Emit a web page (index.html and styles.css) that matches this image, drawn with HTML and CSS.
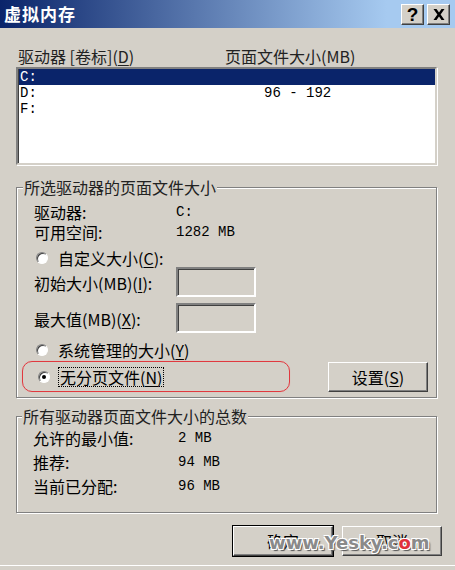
FILE: index.html
```html
<!DOCTYPE html>
<html lang="zh-CN">
<head>
  <meta charset="UTF-8" />
  <title>虚拟内存</title>
  <link rel="stylesheet" href="styles.css">
</head>
<body>
  <div class="window">
    <div class="titlebar">
      <span class="title">虚拟内存</span>
      <span class="caption-btns">
        <span class="cap-btn help">?</span>
        <span class="cap-btn">
          <svg width="12" height="11" viewBox="0 0 12 11"><path d="M0.5 0h3l2.5 3.6L8.5 0h3L7.6 5.5 11.5 11h-3L6 7.4 3.5 11h-3l3.9-5.5z" fill="#000"/></svg>
        </span>
      </span>
    </div>

    <div class="content">
      <div class="list-head">
        <span class="col-drive">驱动器 [卷标](<u>D</u>)</span>
        <span>页面文件大小(MB)</span>
      </div>
      <div class="listbox">
        <div class="row selected"><span class="col-drive">C:</span><span></span></div>
        <div class="row"><span class="col-drive">D:</span><span class="col-size">96 - 192</span></div>
        <div class="row"><span class="col-drive">F:</span><span></span></div>
      </div>

      <fieldset class="group first">
        <legend>所选驱动器的页面文件大小</legend>
        <div class="info"><span class="key">驱动器:</span><span class="val">C:</span></div>
        <div class="info"><span class="key">可用空间:</span><span class="val">1282 MB</span></div>
        <div class="option top"><span class="radio"></span>自定义大小(<u>C</u>):</div>
        <div class="field"><span class="key">初始大小(MB)(<u>I</u>):</span><span class="textbox"></span></div>
        <div class="field"><span class="key">最大值(MB)(<u>X</u>):</span><span class="textbox"></span></div>
        <div class="option system"><span class="radio"></span>系统管理的大小(<u>Y</u>)</div>
        <div class="choice-row">
          <div class="highlight">
            <div class="option"><span class="radio checked"></span><span class="focus">无分页文件(<u>N</u>)</span></div>
          </div>
          <span class="button">设置(<u>S</u>)</span>
        </div>
      </fieldset>

      <fieldset class="group totals">
        <legend>所有驱动器页面文件大小的总数</legend>
        <div class="total"><span class="key">允许的最小值:</span><span class="val">2 MB</span></div>
        <div class="total"><span class="key">推荐:</span><span class="val">94 MB</span></div>
        <div class="total"><span class="key">当前已分配:</span><span class="val">96 MB</span></div>
      </fieldset>

      <div class="actions">
        <span class="button default">确定</span>
        <span class="button">取消</span>
        <span class="watermark">www.Yesky.c<span class="red">o</span>m</span>
      </div>
    </div>
  </div>
</body>
</html>
```

FILE: styles.css
```css
* { box-sizing: border-box; }
body {
  margin: 0;
  background: #d4d0c8;
  font-family: "Noto Sans CJK SC", sans-serif;
  font-size: 16px;
  color: #000;
}
u { text-decoration: underline; text-underline-offset: 2px; }

.window {
  width: 455px;
  height: 566px;
  border-bottom: 1px solid #fff;
  overflow: hidden;
}

.titlebar {
  height: 28px;
  display: flex;
  align-items: center;
  justify-content: space-between;
  padding: 0 5px 0 4px;
  background: linear-gradient(to right, #0a246a, #a6caf0 85%);
}
.title {
  color: #fff;
  font-weight: bold;
  font-size: 17px;
  letter-spacing: 1px;
  line-height: 28px;
}
.caption-btns { display: flex; gap: 3px; }
.cap-btn {
  width: 23px;
  height: 21px;
  display: flex;
  align-items: center;
  justify-content: center;
  background: #d4d0c8;
  border: 1px solid;
  border-color: #fff #404040 #404040 #fff;
  box-shadow: inset -1px -1px 0 #808080;
}
.cap-btn.help {
  font-family: "Liberation Sans", sans-serif;
  font-weight: bold;
  font-size: 19px;
  line-height: 1;
}

.content { padding: 0 18px 0 16px; }

.list-head {
  display: flex;
  margin-top: 20px;
  padding-left: 2px;
  line-height: 16px;
  color: #222;
}
.col-drive { width: 207px; }

.listbox {
  margin-top: 3px;
  height: 98px;
  background: #fff;
  border: 2px solid;
  border-color: #808080 #d4d0c8 #d4d0c8 #808080;
  box-shadow: inset 1px 1px 0 #404040, 1px 1px 0 #fff;
  padding: 0 0 0 1px;
}
.row {
  display: flex;
  height: 16px;
  line-height: 16px;
  font-family: "Liberation Mono", monospace;
  font-size: 14px;
  padding-left: 1px;
}
.row .col-drive { width: 244px; }
.row.selected { background: #0a246a; color: #fff; }

.group {
  margin: 14px 0 0;
  padding: 0 8px 5px 17px;
  min-width: 0;
  border: 1px solid #808080;
  box-shadow: inset 1px 1px 0 #fff, 1px 1px 0 #fff;
}
.group legend {
  margin-left: -11px;
  padding: 0 1px;
  line-height: 16px;
  background: #d4d0c8;
  color: #222;
}

.info {
  display: flex;
  line-height: 20px;
  margin-top: 0;
}
.info:first-of-type { margin-top: 7px; }
.key { width: 142px; }
.val {
  font-family: "Liberation Mono", monospace;
  font-size: 14px;
}

.option {
  display: flex;
  align-items: center;
  height: 18px;
  padding-left: 2px;
}
.option.top { margin-top: 7px; }
.option.system { margin-top: 8px; }

.radio {
  width: 12px;
  height: 12px;
  margin-right: 10px;
  border-radius: 50%;
  background: #fff;
  border: 1px solid;
  border-color: #808080 #fff #fff #808080;
  box-shadow: inset 1px 1px 0 #404040;
  display: flex;
  align-items: center;
  justify-content: center;
}
.radio.checked::after {
  content: "";
  width: 4px;
  height: 4px;
  border-radius: 50%;
  background: #000;
}

.field {
  display: flex;
  align-items: center;
  height: 30px;
  margin-bottom: 6px;
}
.field .key { position: relative; top: 1px; }
.textbox {
  width: 80px;
  height: 30px;
  border: 2px solid;
  border-color: #808080 #fff #fff #808080;
  box-shadow: inset 1px 1px 0 #404040;
  background: #d4d0c8;
}

.choice-row {
  display: flex;
  justify-content: space-between;
  align-items: center;
  margin-top: 2px;
}
.highlight {
  margin-left: -12px;
  width: 268px;
  height: 31px;
  border: 1px solid #e0393f;
  border-radius: 10px;
  padding-left: 13px;
  display: flex;
  align-items: center;
  box-shadow: 0 0 1px #f29a9d;
}
.focus {
  outline: 1px dotted #000;
  outline-offset: 1px;
  line-height: 16px;
}

.button {
  width: 100px;
  height: 30px;
  display: flex;
  align-items: center;
  justify-content: center;
  border: 1px solid;
  border-color: #fff #404040 #404040 #fff;
  box-shadow: inset -1px -1px 0 #808080;
  background: #d4d0c8;
}

.group.totals {
  margin-top: 10px;
  padding: 2px 8px 14px 16px;
}
.total { display: flex; line-height: 24px; }
.total .key { width: 145px; }

.actions {
  position: relative;
  display: flex;
  justify-content: flex-end;
  gap: 9px;
  margin: 13px -5px 0 0;
}
.button.default { outline: 1px solid #000; }

.watermark {
  position: absolute;
  left: 253px;
  top: 6px;
  font-family: "DejaVu Sans", sans-serif;
  font-weight: bold;
  font-size: 18px;
  color: #8a8a8a;
  text-shadow: -1px -1px 0 #fff, 1px -1px 0 #fff, -1px 1px 0 #fff, 1px 1px 0 #fff, 2px 2px 1px #555;
}
.watermark .red { color: #e0303a; }
```
